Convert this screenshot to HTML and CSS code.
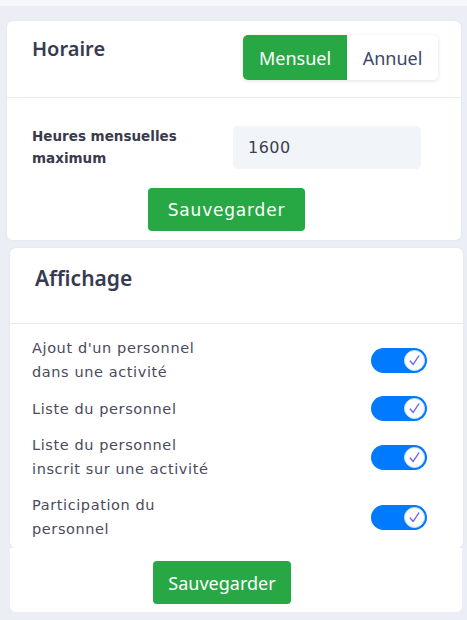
FILE: index.html
```html
<!DOCTYPE html>
<html lang="fr">
<head>
<meta charset="UTF-8">
<meta name="viewport" content="width=device-width, initial-scale=1.0">
<title>Paramètres</title>
<link rel="stylesheet" href="styles.css">
</head>
<body>
<div class="top-strip"></div>
<div class="page">
    <section class="card card-schedule">
        <div class="card-head">
            <h2>Horaire</h2>
            <div class="segment">
                <button class="seg-btn active">Mensuel</button>
                <button class="seg-btn">Annuel</button>
            </div>
        </div>
        <div class="card-body">
            <div class="field">
                <label for="maxHours">Heures mensuelles maximum</label>
                <input id="maxHours" type="text" value="1600">
            </div>
            <div class="actions">
                <button class="btn-save">Sauvegarder</button>
            </div>
        </div>
    </section>

    <section class="card card-display">
        <div class="card-head tall">
            <h2>Affichage</h2>
        </div>
        <ul class="option-list">
            <li class="option">
                <span class="option-label">Ajout d'un personnel dans une activité</span>
                <span class="switch"><span class="knob"><svg viewBox="0 0 20 20"><path d="M5.5 10.5 L8.6 14.2 L14.6 5.2"/></svg></span></span>
            </li>
            <li class="option">
                <span class="option-label">Liste du personnel</span>
                <span class="switch"><span class="knob"><svg viewBox="0 0 20 20"><path d="M5.5 10.5 L8.6 14.2 L14.6 5.2"/></svg></span></span>
            </li>
            <li class="option">
                <span class="option-label">Liste du personnel inscrit sur une activité</span>
                <span class="switch"><span class="knob"><svg viewBox="0 0 20 20"><path d="M5.5 10.5 L8.6 14.2 L14.6 5.2"/></svg></span></span>
            </li>
            <li class="option">
                <span class="option-label">Participation du personnel</span>
                <span class="switch"><span class="knob"><svg viewBox="0 0 20 20"><path d="M5.5 10.5 L8.6 14.2 L14.6 5.2"/></svg></span></span>
            </li>
        </ul>
    </section>
    <div class="card-foot">
        <button class="btn-save alt">Sauvegarder</button>
    </div>
</div>
</body>
</html>
```
FILE: styles.css
```css
/* Page */
body {
    margin: 0;
    padding: 0;
    background-color: #eceef6;
    font-family: "DejaVu Sans", sans-serif;
    color: #3b3d52;
}
.top-strip {
    height: 6px;
    background-color: #f6f7fb;
}
.page {
    padding-top: 15px;
}

/* Cards */
.card {
    background-color: #fff;
    border-radius: 6px;
    box-shadow: 0 0 3px rgba(60, 70, 120, 0.06);
}
.card-schedule {
    margin-left: 7px;
    width: 454px;
    height: 219px;
}
.card-display {
    margin: 8px 0 0 10px;
    width: 453px;
    height: 300px;
}
.card-head {
    display: flex;
    justify-content: space-between;
    align-items: flex-start;
    height: 62px;
    padding: 14px 23px 0 25px;
    border-bottom: 1px solid #e8e9f0;
}
.card-head h2 {
    margin: 0;
    font-family: "Noto Sans", sans-serif;
    font-size: 20px;
    font-weight: 600;
    line-height: 28px;
    color: #363b52;
}
.card-head.tall {
    height: 56px;
    padding: 16px 25px 3px 25px;
}
.card-head.tall h2 {
    font-size: 21px;
}

/* Segmented switch */
.segment {
    display: flex;
    height: 45px;
    border-radius: 5px;
    box-shadow: 0 1px 4px rgba(0, 0, 0, 0.12);
    overflow: hidden;
}
.seg-btn {
    border: none;
    background-color: #fff;
    font-family: "Noto Sans", sans-serif;
    font-size: 18px;
    color: #3e4668;
    padding: 0 12px;
    width: 91px;
    cursor: pointer;
}
.seg-btn.active {
    width: 104px;
    background-color: #28a745;
    color: #fff;
}

/* Form */
.card-body {
    padding: 27px 40px 0 25px;
}
.field {
    display: grid;
    grid-template-columns: 201px 188px;
    align-items: center;
}
.field label {
    font-size: 13.5px;
    font-weight: 600;
    line-height: 22px;
    color: #3a3a4c;
}
.field input {
    height: 43px;
    box-sizing: border-box;
    padding: 0 15px;
    border: none;
    border-radius: 5px;
    background-color: #f1f4f8;
    font-family: "DejaVu Sans", sans-serif;
    font-size: 16px;
    letter-spacing: 0.5px;
    color: #3d3f52;
}
.actions {
    display: flex;
    justify-content: center;
    margin-top: 19px;
}
.btn-save {
    width: 157px;
    height: 43px;
    padding: 0;
    border: none;
    border-radius: 4px;
    background-color: #28a745;
    color: #fff;
    font-family: "DejaVu Sans", sans-serif;
    font-size: 17px;
    letter-spacing: 0.8px;
    cursor: pointer;
}
.btn-save.alt {
    width: 138px;
    font-family: "Noto Sans", sans-serif;
    font-size: 18px;
    letter-spacing: 0;
}

/* Toggle list */
.option-list {
    list-style: none;
    margin: 0;
    padding: 12px 36px 0 22px;
}
.option {
    display: flex;
    justify-content: space-between;
    align-items: center;
    margin-bottom: 12px;
}
.option-label {
    max-width: 185px;
    font-size: 14.5px;
    letter-spacing: 0.6px;
    line-height: 24px;
    color: #4a4b5c;
}
.switch {
    display: flex;
    justify-content: flex-end;
    align-items: center;
    width: 56px;
    height: 25px;
    box-sizing: border-box;
    padding-right: 2px;
    border-radius: 13px;
    background-color: #007bff;
}
.knob {
    display: flex;
    width: 21px;
    height: 21px;
    box-sizing: border-box;
    border: 1px solid #cfe2ff;
    border-radius: 50%;
    background-color: #fff;
}
.knob svg {
    width: 19px;
    height: 19px;
}
.knob path {
    fill: none;
    stroke: #6f63f5;
    stroke-width: 1.4;
    stroke-linecap: round;
    stroke-linejoin: round;
}

/* Footer */
.card-foot {
    display: flex;
    justify-content: center;
    margin-left: 10px;
    width: 424px;
    height: 51px;
    padding: 13px 28px 0 0;
    background-color: #fff;
    border-radius: 0 0 6px 6px;
}
```
